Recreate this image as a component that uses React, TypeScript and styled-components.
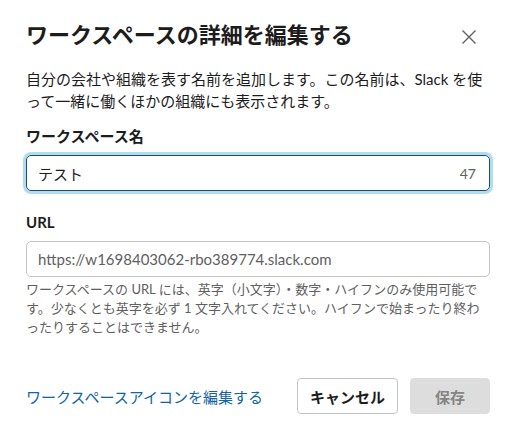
import React from "react";
import styled, { createGlobalStyle } from "styled-components";

const Global = createGlobalStyle`
  html, body { margin: 0; padding: 0; background: #fff; }
  body { font-family: Lato, "Noto Sans CJK JP", sans-serif; color: #1d1c1d; }
  * { box-sizing: border-box; }
`;

const Dialog = styled.div`
  width: 511px;
  height: 429px;
  padding: 18px 21px 0 26px;
  display: flex;
  flex-direction: column;
`;

const Header = styled.div`
  display: flex;
  align-items: center;
  justify-content: space-between;
`;

const Title = styled.h1`
  margin: 0;
  font-size: 22px;
  line-height: 34px;
  font-weight: 700;
  color: #1d1c1d;
`;

const Close = styled.button`
  width: 26px;
  height: 26px;
  border: none;
  background: none;
  padding: 0;
  margin-right: 8px;
  margin-top: 4px;
  display: flex;
  align-items: center;
  justify-content: center;
  cursor: pointer;
`;

const Desc = styled.p`
  margin: 16px 0 0;
  font-size: 15px;
  line-height: 22px;
  color: #1d1c1d;
`;

const Label = styled.label<{ $top: number }>`
  display: block;
  font-size: 15px;
  font-weight: 700;
  line-height: 22px;
  margin-top: ${(p) => p.$top}px;
  margin-bottom: 8px;
`;

const Field = styled.div<{ $focus?: boolean }>`
  height: 36px;
  border-radius: 5px;
  border: 1px solid ${(p) => (p.$focus ? "#1d4d6e" : "#c4c4c4")};
  box-shadow: ${(p) => (p.$focus ? "0 0 0 3px rgba(29,155,209,0.35)" : "none")};
  display: flex;
  align-items: center;
  justify-content: space-between;
  padding: 0 13px 0 11px;
  font-size: 15px;
  color: ${(p) => (p.$focus ? "#1d1c1d" : "#616061")};
`;

const Count = styled.span`
  font-size: 14px;
  color: #616061;
`;

const Help = styled.p`
  margin: 3px 0 0;
  font-size: 13px;
  line-height: 19px;
  color: #616061;
`;

const Footer = styled.div`
  margin-top: auto;
  margin-bottom: 15px;
  display: flex;
  align-items: center;
`;

const Link = styled.a`
  font-size: 15px;
  color: #1264a3;
  text-decoration: none;
  flex: 1;
`;

const Button = styled.button<{ $primary?: boolean }>`
  height: 36px;
  padding: 0 12px;
  border-radius: 4px;
  font-family: inherit;
  font-size: 15px;
  font-weight: 700;
  border: 1px solid ${(p) => (p.$primary ? "#dddddd" : "#c4c4c4")};
  background: ${(p) => (p.$primary ? "#dddddd" : "#fff")};
  color: ${(p) => (p.$primary ? "#858585" : "#1d1c1d")};
  min-width: 80px;
  margin-left: 12px;
`;

export default function App() {
  return (
    <>
      <Global />
      <Dialog>
        <Header>
          <Title>ワークスペースの詳細を編集する</Title>
          <Close aria-label="close">
            <svg width="16" height="16" viewBox="0 0 16 16">
              <path d="M1.5 1.5 L14.5 14.5 M14.5 1.5 L1.5 14.5" stroke="#616061" strokeWidth="1.4" />
            </svg>
          </Close>
        </Header>
        <Desc>
          自分の会社や組織を表す名前を追加します。この名前は、Slack を使って一緒に働くほかの組織にも表示されます。
        </Desc>
        <Label $top={13}>ワークスペース名</Label>
        <Field $focus>
          <span>テスト</span>
          <Count>47</Count>
        </Field>
        <Label $top={20}>URL</Label>
        <Field>
          <span>https://w1698403062-rbo389774.slack.com</span>
        </Field>
        <Help>
          ワークスペースの URL には、英字（小文字）・数字・ハイフンのみ使用可能です。少なくとも英字を必ず 1 文字入れてください。ハイフンで始まったり終わったりすることはできません。
        </Help>
        <Footer>
          <Link href="#">ワークスペースアイコンを編集する</Link>
          <Button>キャンセル</Button>
          <Button $primary>保存</Button>
        </Footer>
      </Dialog>
    </>
  );
}
